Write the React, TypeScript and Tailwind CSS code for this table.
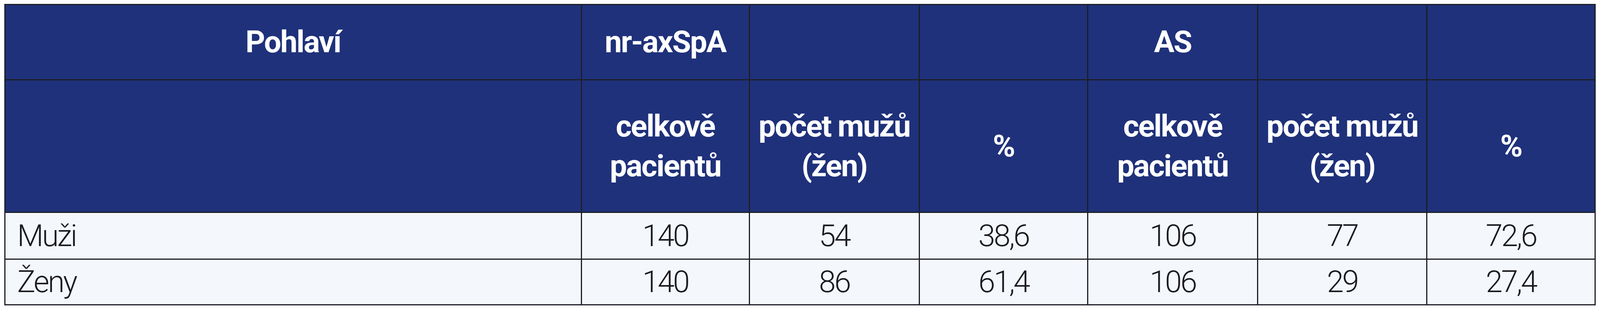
import React from "react";

const headTop = ["Pohlaví", "nr-axSpA", "", "", "AS", "", ""];
const headSub = ["", "celkově pacientů", "počet mužů (žen)", "%", "celkově pacientů", "počet mužů (žen)", "%"];

const rows = [
  ["Muži", "140", "54", "38,6", "106", "77", "72,6"],
  ["Ženy", "140", "86", "61,4", "106", "29", "27,4"],
];

const colClasses = [
  "w-[36.25%]",
  "w-[10.56%]",
  "w-[10.69%]",
  "w-[10.6%]",
  "w-[10.67%]",
  "w-[10.65%]",
  "w-[10.58%]",
];

const line = "border-[3px] border-[#1d1e26]";

const App = () => {
  return (
    <div
      className="w-full h-[800px] bg-white pt-[10px] px-[11px] overflow-hidden"
      style={{ fontFamily: "Roboto, 'Liberation Sans', sans-serif" }}
    >
      <table className={`table-fixed border-collapse w-full ${line}`}>
        <colgroup>
          {colClasses.map((c, i) => (
            <col key={i} className={c} />
          ))}
        </colgroup>
        <thead>
          {/* group header */}
          <tr className="bg-[#1f317a]">
            {headTop.map((t, i) => (
              <th
                key={i}
                className={`h-[193px] p-0 ${line} text-center align-middle text-white font-bold text-[78px] leading-none tracking-[-0.03em]`}
              >
                {t}
              </th>
            ))}
          </tr>
          {/* column header */}
          <tr className="bg-[#1f317a]">
            {headSub.map((t, i) => (
              <th
                key={i}
                className={`h-[340px] px-4 py-0 ${line} text-center align-middle text-white font-bold text-[78px] leading-[102px] tracking-[-0.03em]`}
              >
                {t}
              </th>
            ))}
          </tr>
        </thead>
        <tbody>
          {rows.map((r, ri) => (
            <tr key={ri} className="bg-[#f4f8fd]">
              {r.map((c, ci) => (
                <td
                  key={ci}
                  className={`${ri === 0 ? "h-[120px]" : "h-[117px]"} py-0 ${line} align-middle text-[#1b1b1f] font-light text-[78px] leading-none tracking-[-0.05em] ${
                    ci === 0 ? "text-left pl-[30px]" : "text-center px-0"
                  }`}
                >
                  {c}
                </td>
              ))}
            </tr>
          ))}
        </tbody>
      </table>
    </div>
  );
};

export default App;
